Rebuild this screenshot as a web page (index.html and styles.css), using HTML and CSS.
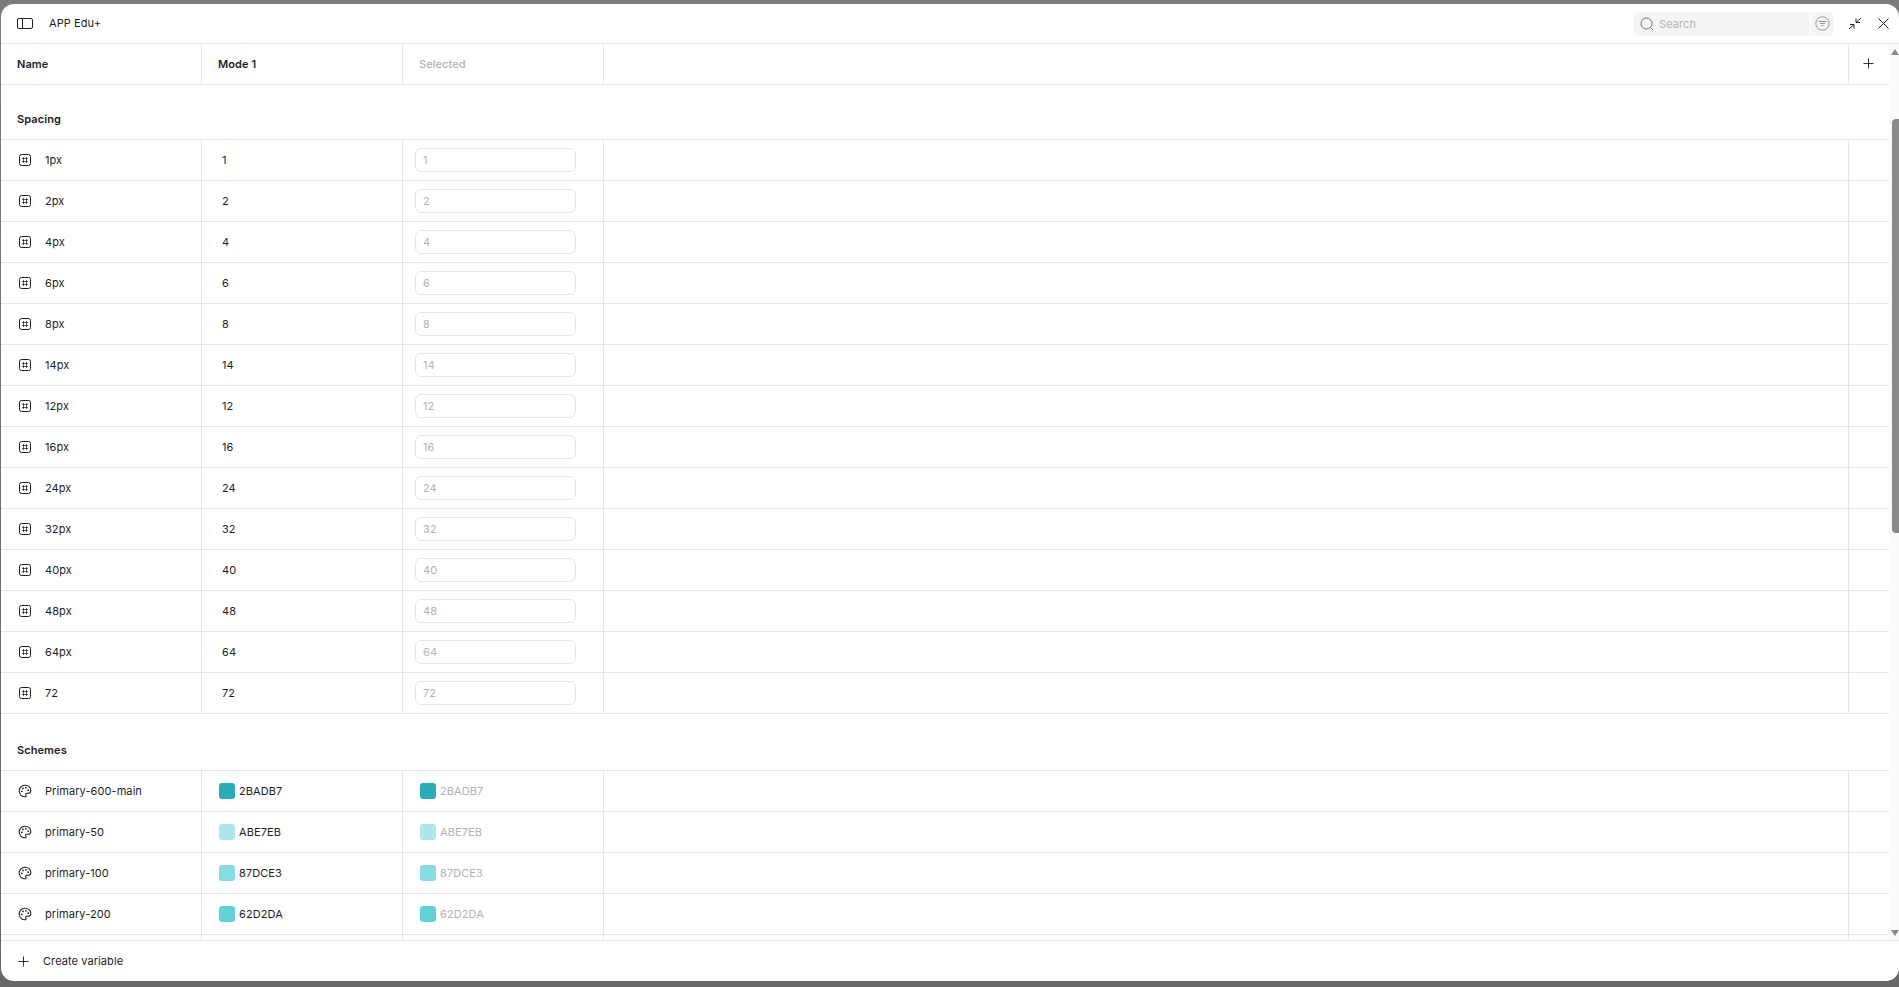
FILE: index.html
```html
<!DOCTYPE html>
<html lang="en">
<head>
  <meta charset="UTF-8" />
  <title>APP Edu+ variables</title>
  <link rel="stylesheet" href="styles.css">
</head>
<body>
  <svg class="sprites" width="0" height="0">
    <symbol id="hash" viewBox="0 0 12 12">
      <rect x=".5" y=".5" width="11" height="11" rx="2" fill="none" stroke="currentColor" />
      <path d="M4.5 3V9M7.5 3V9M3 4.5H9M3 7.5H9" fill="none" stroke="currentColor" stroke-width=".7" />
    </symbol>
    <symbol id="palette" viewBox="0 0 24 24">
      <path d="M12 22a1 1 0 0 1 0-20 10 9 0 0 1 10 9 5 5 0 0 1-5 5h-2.25a1.75 1.75 0 0 0-1.4 2.8l.3.4a1.75 1.75 0 0 1-1.4 2.8z" fill="none" stroke="currentColor" stroke-width="1.8" />
      <circle cx="13.5" cy="6.5" r="1.5" fill="currentColor" />
      <circle cx="17.5" cy="10.5" r="1.5" fill="currentColor" />
      <circle cx="6.5" cy="12.5" r="1.5" fill="currentColor" />
      <circle cx="8.5" cy="7.5" r="1.5" fill="currentColor" />
    </symbol>
    <symbol id="plus" viewBox="0 0 12 12">
      <path d="M6 .5V11.5M.5 6H11.5" fill="none" stroke="currentColor" />
    </symbol>
  </svg>

  <div class="panel">
    <header class="topbar">
      <svg class="icon-sidebar" width="16" height="11" viewBox="0 0 16 11">
        <rect x=".5" y=".5" width="15" height="10" rx="1.5" fill="none" stroke="currentColor" />
        <path d="M5.5 .5V10.5" fill="none" stroke="currentColor" />
      </svg>
      <span class="title">APP Edu+</span>
      <div class="search">
        <div class="search-field">
          <svg width="14" height="14" viewBox="0 0 14 14">
            <circle cx="6.5" cy="6.5" r="5.5" fill="none" stroke="#6e6e6e" />
            <path d="M10.5 10.5 13 13" fill="none" stroke="#6e6e6e" />
          </svg>
          <span>Search</span>
        </div>
        <div class="search-filter">
          <svg width="15" height="15" viewBox="0 0 15 15">
            <circle cx="7.5" cy="7.5" r="6.7" fill="none" stroke="#808080" stroke-width=".8" />
            <path d="M3.5 5.5H11.5M5 7.5H10M6.5 9.5H8.5" fill="none" stroke="#808080" stroke-width=".8" />
          </svg>
        </div>
      </div>
      <svg class="icon-collapse" width="14" height="13" viewBox="0 0 14 13">
        <path d="M8 5.5 13 1M8 1.5V5.5H12M6 7.5 1 12M2 7.5H6V11.5" fill="none" stroke="#222" />
      </svg>
      <svg class="icon-close" width="11" height="11" viewBox="0 0 11 11">
        <path d="M.5 .5 10.5 10.5M10.5 .5 .5 10.5" fill="none" stroke="#222" />
      </svg>
    </header>

    <div class="body">
      <div class="table">
        <div class="row row-head">
          <div class="cell cell-name">Name</div>
          <div class="cell cell-mode">Mode 1</div>
          <div class="cell cell-selected">Selected</div>
          <div class="cell"></div>
          <div class="cell cell-add"><svg width="11" height="11"><use href="#plus" /></svg></div>
        </div>

        <div class="group">Spacing</div>

        <div class="row">
          <div class="cell cell-name"><svg class="type-icon" width="12" height="12"><use href="#hash" /></svg>1px</div>
          <div class="cell cell-value">1</div>
          <div class="cell cell-input"><div class="ghost-input">1</div></div>
          <div class="cell"></div><div class="cell"></div>
        </div>
        <div class="row">
          <div class="cell cell-name"><svg class="type-icon" width="12" height="12"><use href="#hash" /></svg>2px</div>
          <div class="cell cell-value">2</div>
          <div class="cell cell-input"><div class="ghost-input">2</div></div>
          <div class="cell"></div><div class="cell"></div>
        </div>
        <div class="row">
          <div class="cell cell-name"><svg class="type-icon" width="12" height="12"><use href="#hash" /></svg>4px</div>
          <div class="cell cell-value">4</div>
          <div class="cell cell-input"><div class="ghost-input">4</div></div>
          <div class="cell"></div><div class="cell"></div>
        </div>
        <div class="row">
          <div class="cell cell-name"><svg class="type-icon" width="12" height="12"><use href="#hash" /></svg>6px</div>
          <div class="cell cell-value">6</div>
          <div class="cell cell-input"><div class="ghost-input">6</div></div>
          <div class="cell"></div><div class="cell"></div>
        </div>
        <div class="row">
          <div class="cell cell-name"><svg class="type-icon" width="12" height="12"><use href="#hash" /></svg>8px</div>
          <div class="cell cell-value">8</div>
          <div class="cell cell-input"><div class="ghost-input">8</div></div>
          <div class="cell"></div><div class="cell"></div>
        </div>
        <div class="row">
          <div class="cell cell-name"><svg class="type-icon" width="12" height="12"><use href="#hash" /></svg>14px</div>
          <div class="cell cell-value">14</div>
          <div class="cell cell-input"><div class="ghost-input">14</div></div>
          <div class="cell"></div><div class="cell"></div>
        </div>
        <div class="row">
          <div class="cell cell-name"><svg class="type-icon" width="12" height="12"><use href="#hash" /></svg>12px</div>
          <div class="cell cell-value">12</div>
          <div class="cell cell-input"><div class="ghost-input">12</div></div>
          <div class="cell"></div><div class="cell"></div>
        </div>
        <div class="row">
          <div class="cell cell-name"><svg class="type-icon" width="12" height="12"><use href="#hash" /></svg>16px</div>
          <div class="cell cell-value">16</div>
          <div class="cell cell-input"><div class="ghost-input">16</div></div>
          <div class="cell"></div><div class="cell"></div>
        </div>
        <div class="row">
          <div class="cell cell-name"><svg class="type-icon" width="12" height="12"><use href="#hash" /></svg>24px</div>
          <div class="cell cell-value">24</div>
          <div class="cell cell-input"><div class="ghost-input">24</div></div>
          <div class="cell"></div><div class="cell"></div>
        </div>
        <div class="row">
          <div class="cell cell-name"><svg class="type-icon" width="12" height="12"><use href="#hash" /></svg>32px</div>
          <div class="cell cell-value">32</div>
          <div class="cell cell-input"><div class="ghost-input">32</div></div>
          <div class="cell"></div><div class="cell"></div>
        </div>
        <div class="row">
          <div class="cell cell-name"><svg class="type-icon" width="12" height="12"><use href="#hash" /></svg>40px</div>
          <div class="cell cell-value">40</div>
          <div class="cell cell-input"><div class="ghost-input">40</div></div>
          <div class="cell"></div><div class="cell"></div>
        </div>
        <div class="row">
          <div class="cell cell-name"><svg class="type-icon" width="12" height="12"><use href="#hash" /></svg>48px</div>
          <div class="cell cell-value">48</div>
          <div class="cell cell-input"><div class="ghost-input">48</div></div>
          <div class="cell"></div><div class="cell"></div>
        </div>
        <div class="row">
          <div class="cell cell-name"><svg class="type-icon" width="12" height="12"><use href="#hash" /></svg>64px</div>
          <div class="cell cell-value">64</div>
          <div class="cell cell-input"><div class="ghost-input">64</div></div>
          <div class="cell"></div><div class="cell"></div>
        </div>
        <div class="row">
          <div class="cell cell-name"><svg class="type-icon" width="12" height="12"><use href="#hash" /></svg>72</div>
          <div class="cell cell-value">72</div>
          <div class="cell cell-input"><div class="ghost-input">72</div></div>
          <div class="cell"></div><div class="cell"></div>
        </div>

        <div class="group group-next">Schemes</div>

        <div class="row">
          <div class="cell cell-name"><svg class="type-icon type-palette" width="14" height="14"><use href="#palette" /></svg>Primary-600-main</div>
          <div class="cell cell-color"><span class="swatch swatch-600"></span>2BADB7</div>
          <div class="cell cell-color cell-muted"><span class="swatch swatch-600"></span>2BADB7</div>
          <div class="cell"></div><div class="cell"></div>
        </div>
        <div class="row">
          <div class="cell cell-name"><svg class="type-icon type-palette" width="14" height="14"><use href="#palette" /></svg>primary-50</div>
          <div class="cell cell-color"><span class="swatch swatch-50"></span>ABE7EB</div>
          <div class="cell cell-color cell-muted"><span class="swatch swatch-50"></span>ABE7EB</div>
          <div class="cell"></div><div class="cell"></div>
        </div>
        <div class="row">
          <div class="cell cell-name"><svg class="type-icon type-palette" width="14" height="14"><use href="#palette" /></svg>primary-100</div>
          <div class="cell cell-color"><span class="swatch swatch-100"></span>87DCE3</div>
          <div class="cell cell-color cell-muted"><span class="swatch swatch-100"></span>87DCE3</div>
          <div class="cell"></div><div class="cell"></div>
        </div>
        <div class="row">
          <div class="cell cell-name"><svg class="type-icon type-palette" width="14" height="14"><use href="#palette" /></svg>primary-200</div>
          <div class="cell cell-color"><span class="swatch swatch-200"></span>62D2DA</div>
          <div class="cell cell-color cell-muted"><span class="swatch swatch-200"></span>62D2DA</div>
          <div class="cell"></div><div class="cell"></div>
        </div>
        <div class="row">
          <div class="cell"></div><div class="cell"></div><div class="cell"></div><div class="cell"></div><div class="cell"></div>
        </div>
      </div>

      <div class="scrollbar">
        <span class="arrow arrow-up"></span>
        <span class="thumb"></span>
        <span class="arrow arrow-down"></span>
      </div>
    </div>

    <footer class="footer">
      <svg width="11" height="11"><use href="#plus" /></svg>
      <span>Create variable</span>
    </footer>
  </div>
</body>
</html>
```

FILE: styles.css
```css
:root {
  --line: #e6e6e6;
  --text: #1e1e1e;
  --muted: #b3b3b3;
}

* {
  box-sizing: border-box;
}

html, body {
  height: 100%;
}

body {
  margin: 0;
  padding: 4px 0 6px 1px;
  overflow: hidden;
  background: linear-gradient(#7b7b7b, #676767);
  font-family: Inter, sans-serif;
  font-size: 11px;
  letter-spacing: .08px;
  color: var(--text);
}

.sprites {
  position: absolute;
}

.panel {
  height: 100%;
  display: flex;
  flex-direction: column;
  background: #fff;
  border-radius: 13px;
  overflow: hidden;
}

.topbar {
  flex: none;
  height: 40px;
  display: flex;
  align-items: center;
  padding: 0 10px 1px 16px;
  border-bottom: 1px solid var(--line);
}

.icon-sidebar {
  flex: none;
  color: #222;
  margin-right: 16px;
}

.title {
  flex: 1;
}

.search {
  display: flex;
  width: 200px;
  height: 24px;
  margin-top: 1px;
  border-radius: 5px;
  overflow: hidden;
}

.search-field {
  flex: 1;
  display: flex;
  align-items: center;
  gap: 5px;
  padding-left: 6px;
  background: #f5f5f5;
  color: var(--muted);
}

.search-filter {
  width: 23px;
  display: flex;
  align-items: center;
  justify-content: center;
  margin-left: 1px;
  background: #f5f5f5;
}

.icon-collapse {
  margin-left: 14px;
}

.icon-close {
  margin-left: 16px;
}

.body {
  flex: 1;
  min-height: 0;
  display: flex;
}

.table {
  flex: 1;
  min-width: 0;
  overflow: hidden;
}

.row {
  display: grid;
  grid-template-columns: 201px 201px 201px 1fr 40px;
  height: 41px;
  border-bottom: 1px solid var(--line);
}

.cell {
  display: flex;
  align-items: center;
  border-right: 1px solid var(--line);
}

.cell:last-child {
  border-right: none;
}

.cell-name {
  padding-left: 16px;
}

.row-head .cell {
  font-weight: 600;
}

.row-head .cell-mode {
  padding-left: 16px;
}

.row-head .cell-selected {
  padding-left: 16px;
  font-weight: 500;
  color: var(--muted);
}

.cell-add {
  justify-content: center;
  padding: 0 1px 2px 0;
}

.group {
  height: 55px;
  display: flex;
  align-items: flex-end;
  padding: 0 0 13px 16px;
  border-bottom: 1px solid var(--line);
  font-weight: 600;
}

.group-next {
  height: 57px;
  padding-bottom: 13px;
}

.type-icon {
  flex: none;
  margin: 0 14px 0 2px;
}

.type-palette {
  margin: 0 13px 0 1px;
}

.cell-value {
  padding-left: 20px;
}

.cell-input {
  padding-left: 12px;
}

.ghost-input {
  width: 161px;
  height: 24px;
  display: flex;
  align-items: center;
  padding-left: 7px;
  border: 1px solid var(--line);
  border-radius: 6px;
  color: var(--muted);
}

.cell-color {
  gap: 4px;
  padding-left: 17px;
}

.cell-muted {
  color: var(--muted);
}

.swatch {
  flex: none;
  width: 16px;
  height: 16px;
  border-radius: 3px;
}

.swatch-600 { background: #2badb7; }
.swatch-50 { background: #abe7eb; }
.swatch-100 { background: #87dce3; }
.swatch-200 { background: #62d2da; }

.scrollbar {
  flex: none;
  width: 10px;
  display: flex;
  flex-direction: column;
  align-items: flex-end;
  background: #fafafa;
  padding: 5px 0 4px;
}

.arrow {
  width: 0;
  height: 0;
  border-left: 4px solid transparent;
  border-right: 4px solid transparent;
}

.arrow-up {
  border-bottom: 6px solid #8a8a8a;
}

.arrow-down {
  margin-top: auto;
  border-top: 6px solid #8a8a8a;
}

.thumb {
  width: 7px;
  height: 414px;
  margin-top: 64px;
  border-radius: 4px 0 0 4px;
  background: #8a8a8a;
}

.footer {
  flex: none;
  height: 41px;
  display: flex;
  align-items: center;
  gap: 14px;
  padding-left: 17px;
  border-top: 1px solid var(--line);
}
```
